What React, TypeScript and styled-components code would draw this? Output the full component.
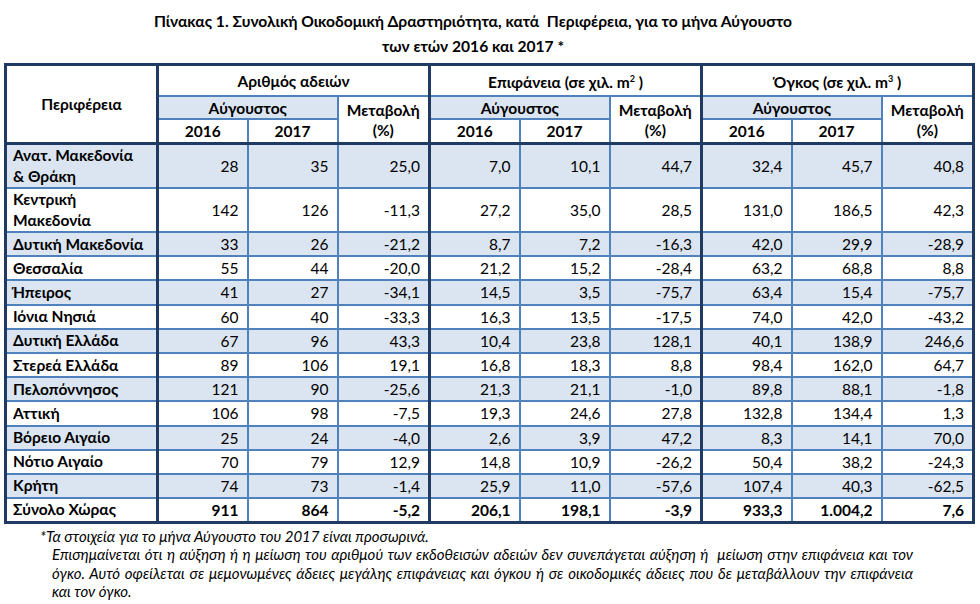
import React from 'react';
import styled, { createGlobalStyle } from 'styled-components';

const GlobalStyle = createGlobalStyle`
  html, body {
    margin: 0;
    padding: 0;
    background: #ffffff;
  }
  body {
    font-family: Lato, "Noto Sans", sans-serif;
    color: #000000;
  }
`;

const Page = styled.div`
  width: 980px;
  height: 604px;
  overflow: hidden;
  padding: 9px 8px 0 4px;
  box-sizing: border-box;
`;

const Title = styled.h1`
  margin: 0 30px 0 0;
  font-size: 15.6px;
  font-weight: 700;
  line-height: 25px;
  text-align: center;
`;

const Table = styled.table`
  margin-top: 4px;
  width: 968px;
  border-collapse: collapse;
  table-layout: fixed;
  border: 3px solid #1f3b63;
  font-size: 15.5px;
`;

const HeadCell = styled.th<{ $shade?: boolean; $thickRight?: boolean; $thickBottom?: boolean; $h?: number }>`
  font-weight: 700;
  text-align: center;
  vertical-align: middle;
  padding: 0 4px;
  line-height: 20px;
  height: ${p => (p.$h ? `${p.$h}px` : 'auto')};
  background: ${p => (p.$shade ? '#dbe5f1' : '#ffffff')};
  border: 2px solid #4f81bd;
  ${p => p.$thickRight && 'border-right: 3px solid #1f3b63;'}
  ${p => p.$thickBottom && 'border-bottom: 3px solid #1f3b63;'}
`;

const Sup = styled.sup`
  font-size: 9px;
`;

const Row = styled.tr<{ $shade?: boolean; $tall?: boolean }>`
  background: ${p => (p.$shade ? '#dbe5f1' : '#ffffff')};
  height: ${p => (p.$tall ? '44px' : '24.2px')};
`;

const NameCell = styled.td`
  font-weight: 700;
  text-align: left;
  padding: 0 6px;
  line-height: 21px;
  border: 2px solid #4f81bd;
  border-right: 3px solid #1f3b63;
`;

const NumCell = styled.td<{ $bold?: boolean; $thickRight?: boolean }>`
  font-weight: ${p => (p.$bold ? 700 : 400)};
  text-align: right;
  padding: 0 8px 0 4px;
  line-height: 20px;
  border: 2px solid #4f81bd;
  ${p => p.$thickRight && 'border-right: 3px solid #1f3b63;'}
`;

const Notes = styled.div`
  font-style: italic;
  font-size: 15px;
  line-height: 18.5px;
  padding-left: 36px;
  margin-top: 3px;
`;

const NoteLine = styled.div<{ $indent?: boolean; $justify?: boolean }>`
  padding-left: ${p => (p.$indent ? '12px' : '0')};
  width: ${p => (p.$justify ? '861px' : 'auto')};
  text-align: ${p => (p.$justify ? 'justify' : 'left')};
  text-align-last: ${p => (p.$justify ? 'justify' : 'auto')};
  white-space: nowrap;
`;

type DataRow = { name: string[]; v: string[]; bold?: boolean };

const rows: DataRow[] = [
  { name: ['Ανατ. Μακεδονία', '& Θράκη'], v: ['28', '35', '25,0', '7,0', '10,1', '44,7', '32,4', '45,7', '40,8'] },
  { name: ['Κεντρική', 'Μακεδονία'], v: ['142', '126', '-11,3', '27,2', '35,0', '28,5', '131,0', '186,5', '42,3'] },
  { name: ['Δυτική Μακεδονία'], v: ['33', '26', '-21,2', '8,7', '7,2', '-16,3', '42,0', '29,9', '-28,9'] },
  { name: ['Θεσσαλία'], v: ['55', '44', '-20,0', '21,2', '15,2', '-28,4', '63,2', '68,8', '8,8'] },
  { name: ['Ήπειρος'], v: ['41', '27', '-34,1', '14,5', '3,5', '-75,7', '63,4', '15,4', '-75,7'] },
  { name: ['Ιόνια Νησιά'], v: ['60', '40', '-33,3', '16,3', '13,5', '-17,5', '74,0', '42,0', '-43,2'] },
  { name: ['Δυτική Ελλάδα'], v: ['67', '96', '43,3', '10,4', '23,8', '128,1', '40,1', '138,9', '246,6'] },
  { name: ['Στερεά Ελλάδα'], v: ['89', '106', '19,1', '16,8', '18,3', '8,8', '98,4', '162,0', '64,7'] },
  { name: ['Πελοπόννησος'], v: ['121', '90', '-25,6', '21,3', '21,1', '-1,0', '89,8', '88,1', '-1,8'] },
  { name: ['Αττική'], v: ['106', '98', '-7,5', '19,3', '24,6', '27,8', '132,8', '134,4', '1,3'] },
  { name: ['Βόρειο Αιγαίο'], v: ['25', '24', '-4,0', '2,6', '3,9', '47,2', '8,3', '14,1', '70,0'] },
  { name: ['Νότιο Αιγαίο'], v: ['70', '79', '12,9', '14,8', '10,9', '-26,2', '50,4', '38,2', '-24,3'] },
  { name: ['Κρήτη'], v: ['74', '73', '-1,4', '25,9', '11,0', '-57,6', '107,4', '40,3', '-62,5'] },
  { name: ['Σύνολο Χώρας'], v: ['911', '864', '-5,2', '206,1', '198,1', '-3,9', '933,3', '1.004,2', '7,6'], bold: true },
];

const groups = [
  { key: 'a', label: <>Αριθμός αδειών</> },
  { key: 'e', label: <>Επιφάνεια (σε χιλ. m<Sup>2</Sup> )</> },
  { key: 'o', label: <>Όγκος (σε χιλ. m<Sup>3</Sup> )</> },
];

const App: React.FC = () => {
  return (
    <>
      <GlobalStyle />
      <Page>
        <Title>
          Πίνακας 1. Συνολική Οικοδομική Δραστηριότητα, κατά&nbsp; Περιφέρεια, για το μήνα Αύγουστο
          <br />
          των ετών 2016 και 2017 *
        </Title>
        <Table>
          <colgroup>
            <col style={{ width: '152px' }} />
            {Array.from({ length: 9 }).map((_, i) => (
              <col key={i} style={{ width: i % 3 === 2 ? '92px' : '90px' }} />
            ))}
          </colgroup>
          <thead>
            <tr>
              <HeadCell rowSpan={3} $thickRight $thickBottom>Περιφέρεια</HeadCell>
              {groups.map(g => (
                <HeadCell key={g.key} colSpan={3} $thickRight $h={29}>{g.label}</HeadCell>
              ))}
            </tr>
            <tr>
              {groups.map(g => (
                <React.Fragment key={g.key}>
                  <HeadCell colSpan={2} $shade $h={21}>Αύγουστος</HeadCell>
                  <HeadCell rowSpan={2} $thickRight $thickBottom>Μεταβολή<br />(%)</HeadCell>
                </React.Fragment>
              ))}
            </tr>
            <tr>
              {groups.map(g => (
                <React.Fragment key={g.key}>
                  <HeadCell $thickBottom $h={22}>2016</HeadCell>
                  <HeadCell $thickBottom>2017</HeadCell>
                </React.Fragment>
              ))}
            </tr>
          </thead>
          <tbody>
            {rows.map((r, i) => (
              <Row key={r.name.join(' ')} $shade={i % 2 === 0 && !r.bold} $tall={r.name.length > 1}>
                <NameCell>
                  {r.name.map((n, j) => (
                    <div key={j}>{n}</div>
                  ))}
                </NameCell>
                {r.v.map((v, j) => (
                  <NumCell key={j} $bold={r.bold} $thickRight={j % 3 === 2}>{v}</NumCell>
                ))}
              </Row>
            ))}
          </tbody>
        </Table>
        <Notes>
          <NoteLine>*Τα στοιχεία για το μήνα Αύγουστο του 2017 είναι προσωρινά.</NoteLine>
          <NoteLine $indent $justify>
            Επισημαίνεται ότι η αύξηση ή η μείωση του αριθμού των εκδοθεισών αδειών δεν συνεπάγεται αύξηση ή&nbsp; μείωση στην επιφάνεια και τον
          </NoteLine>
          <NoteLine $indent $justify>
            όγκο. Αυτό οφείλεται σε μεμονωμένες άδειες μεγάλης επιφάνειας και όγκου ή σε οικοδομικές άδειες που δε μεταβάλλουν την επιφάνεια
          </NoteLine>
          <NoteLine $indent>και τον όγκο.</NoteLine>
        </Notes>
      </Page>
    </>
  );
};

export default App;
